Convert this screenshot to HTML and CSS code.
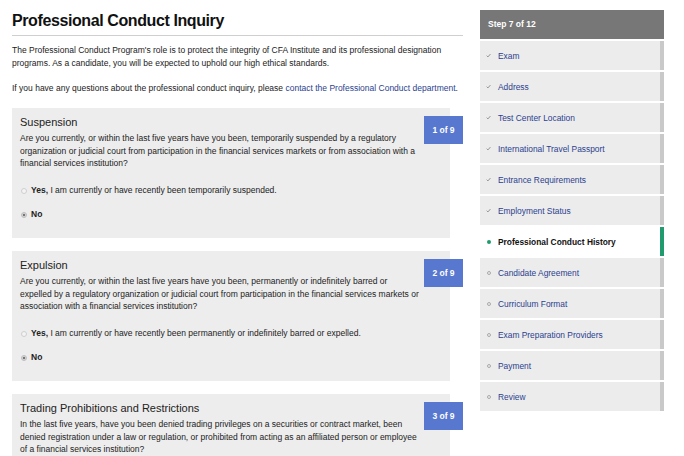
FILE: index.html
```html
<!DOCTYPE html>
<html lang="en">
<head>
  <meta charset="UTF-8">
  <meta name="viewport" content="width=device-width, initial-scale=1.0">
  <title>Professional Conduct Inquiry</title>
  <link rel="stylesheet" href="styles.css">
</head>
<body>
  <div class="page">
    <main class="main">
      <h1 class="page-title">Professional Conduct Inquiry</h1>
      <p class="intro">The Professional Conduct Program's role is to protect the integrity of CFA Institute and its professional designation programs. As a candidate, you will be expected to uphold our high ethical standards.</p>
      <p class="intro">If you have any questions about the professional conduct inquiry, please <a href="#">contact the Professional Conduct department</a>.</p>

      <section class="question-card">
        <div class="question-badge">1 of 9</div>
        <h2 class="question-title">Suspension</h2>
        <p class="question-text">Are you currently, or within the last five years have you been, temporarily suspended by a regulatory organization or judicial court from participation in the financial services markets or from association with a financial services institution?</p>
        <label class="option"><input type="radio" name="q1"><strong>Yes,</strong>&nbsp;I am currently or have recently been temporarily suspended.</label>
        <label class="option"><input type="radio" name="q1" checked><strong>No</strong></label>
      </section>

      <section class="question-card">
        <div class="question-badge">2 of 9</div>
        <h2 class="question-title">Expulsion</h2>
        <p class="question-text">Are you currently, or within the last five years have you been, permanently or indefinitely barred or expelled by a regulatory organization or judicial court from participation in the financial services markets or association with a financial services institution?</p>
        <label class="option"><input type="radio" name="q2"><strong>Yes,</strong>&nbsp;I am currently or have recently been permanently or indefinitely barred or expelled.</label>
        <label class="option"><input type="radio" name="q2" checked><strong>No</strong></label>
      </section>

      <section class="question-card">
        <div class="question-badge">3 of 9</div>
        <h2 class="question-title">Trading Prohibitions and Restrictions</h2>
        <p class="question-text">In the last five years, have you been denied trading privileges on a securities or contract market, been denied registration under a law or regulation, or prohibited from acting as an affiliated person or employee of a financial services institution?</p>
      </section>
    </main>

    <aside class="steps">
      <div class="steps-header">Step 7 of 12</div>
      <ul class="steps-list">
        <li class="step done"><svg class="step-icon" viewBox="0 0 6 6"><polyline points="0.8,3.2 2.3,4.7 5.3,1.3"/></svg><a href="#">Exam</a></li>
        <li class="step done"><svg class="step-icon" viewBox="0 0 6 6"><polyline points="0.8,3.2 2.3,4.7 5.3,1.3"/></svg><a href="#">Address</a></li>
        <li class="step done"><svg class="step-icon" viewBox="0 0 6 6"><polyline points="0.8,3.2 2.3,4.7 5.3,1.3"/></svg><a href="#">Test Center Location</a></li>
        <li class="step done"><svg class="step-icon" viewBox="0 0 6 6"><polyline points="0.8,3.2 2.3,4.7 5.3,1.3"/></svg><a href="#">International Travel Passport</a></li>
        <li class="step done"><svg class="step-icon" viewBox="0 0 6 6"><polyline points="0.8,3.2 2.3,4.7 5.3,1.3"/></svg><a href="#">Entrance Requirements</a></li>
        <li class="step done"><svg class="step-icon" viewBox="0 0 6 6"><polyline points="0.8,3.2 2.3,4.7 5.3,1.3"/></svg><a href="#">Employment Status</a></li>
        <li class="step current"><span class="step-dot"></span><span>Professional Conduct History</span></li>
        <li class="step todo"><span class="step-dot"></span><a href="#">Candidate Agreement</a></li>
        <li class="step todo"><span class="step-dot"></span><a href="#">Curriculum Format</a></li>
        <li class="step todo"><span class="step-dot"></span><a href="#">Exam Preparation Providers</a></li>
        <li class="step todo"><span class="step-dot"></span><a href="#">Payment</a></li>
        <li class="step todo"><span class="step-dot"></span><a href="#">Review</a></li>
      </ul>
    </aside>
  </div>
</body>
</html>
```

FILE: styles.css
```css
html, body {
  margin: 0;
  height: 456px;
  overflow: hidden;
}
body {
  font-family: "Liberation Sans", Arial, sans-serif;
  font-size: 8.5px;
  color: #222;
  background: #fff;
}
a {
  color: #2b3f8f;
  text-decoration: none;
}
.page {
  display: flex;
  gap: 17px;
  padding: 10px 0 0 12px;
}
.main {
  width: 451px;
}
.page-title {
  margin: 0;
  padding-bottom: 3px;
  border-bottom: 1px solid #cfcfcf;
  font-size: 16px;
  line-height: 22px;
  letter-spacing: -0.4px;
  color: #111;
}
.intro {
  margin: 8px 0 12.5px;
  line-height: 12.5px;
}
.intro + .intro {
  margin-top: 0;
  margin-bottom: 14px;
}
.question-card {
  position: relative;
  width: 438px;
  box-sizing: border-box;
  height: 130px;
  margin-bottom: 13px;
  padding: 7px 30px 0 8px;
  background: #ededed;
}
.question-badge {
  position: absolute;
  top: 8px;
  left: 412px;
  width: 39px;
  height: 28px;
  line-height: 28px;
  text-align: center;
  background: #5878cf;
  color: #fff;
  font-weight: bold;
}
.question-title {
  margin: 0 0 2px;
  font-size: 11px;
  font-weight: normal;
  line-height: 15px;
  color: #222;
}
.question-text {
  margin: 0 0 14.5px;
  line-height: 12.5px;
}
.option {
  display: flex;
  align-items: center;
  line-height: 13px;
  margin-bottom: 11px;
}
.option input {
  appearance: none;
  -webkit-appearance: none;
  width: 6px;
  height: 6px;
  margin: 0 4px 0 1px;
  border: 1px solid #cfcfcf;
  border-radius: 50%;
  background: #f4f4f4;
  box-sizing: border-box;
}
.option input:checked {
  border-color: #bdbdbd;
  background: radial-gradient(circle, #777 0 1.4px, #dcdcdc 1.6px);
}
.steps {
  width: 184px;
}
.steps-header {
  height: 29px;
  line-height: 29px;
  padding-left: 8px;
  background: #777;
  color: #fff;
  font-weight: bold;
}
.steps-list {
  list-style: none;
  margin: 0;
  padding: 0;
}
.step {
  display: flex;
  align-items: center;
  height: 29px;
  margin-top: 2px;
  padding-left: 6px;
  background: #ececec;
  border-right: 4px solid #c9c9c9;
  font-size: 8.4px;
}
.step-icon {
  width: 5px;
  height: 5px;
  margin-right: 7px;
  fill: none;
  stroke: #8a8a8a;
  stroke-width: 1.1;
}
.step-dot {
  width: 4px;
  height: 4px;
  margin: 0 7px 0 1px;
  border: 1px solid #aaa;
  border-radius: 50%;
  box-sizing: border-box;
}
.step.current {
  background: #fff;
  border-right-color: #1f9b6d;
  font-weight: bold;
  color: #111;
}
.step.current .step-dot {
  border: none;
  background: #1f9b6d;
}
```
